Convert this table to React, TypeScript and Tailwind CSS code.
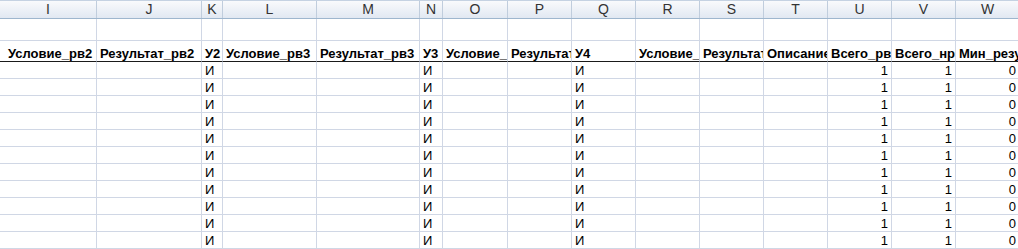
import React from "react";

type Col = { key: string; w: string; head: string; data?: string; align?: "left" | "right" };

const cols: Col[] = [
  { key: "I", w: "w-[97px]", head: "Условие_рв2" },
  { key: "J", w: "w-[105px]", head: "Результат_рв2" },
  { key: "K", w: "w-[21px]", head: "У2", data: "И" },
  { key: "L", w: "w-[94px]", head: "Условие_рв3" },
  { key: "M", w: "w-[103px]", head: "Результат_рв3" },
  { key: "N", w: "w-[23px]", head: "У3", data: "И" },
  { key: "O", w: "w-[65px]", head: "Условие_рв4" },
  { key: "P", w: "w-[64px]", head: "Результат_рв4" },
  { key: "Q", w: "w-[64px]", head: "У4", data: "И" },
  { key: "R", w: "w-[64px]", head: "Условие_рв5" },
  { key: "S", w: "w-[64px]", head: "Результат_рв5" },
  { key: "T", w: "w-[64px]", head: "Описание" },
  { key: "U", w: "w-[64px]", head: "Всего_рв", data: "1", align: "right" },
  { key: "V", w: "w-[64px]", head: "Всего_нр", data: "1", align: "right" },
  { key: "W", w: "w-[64px]", head: "Мин_результат", data: "0", align: "right" },
];

const rows = Array.from({ length: 12 }, (_, i) => i);

export default function App() {
  return (
    <div className="w-[1018px] h-[249px] overflow-hidden bg-white font-['Liberation_Sans',Arial,sans-serif] text-[13px] text-black">
      {/* column letters */}
      <div className="flex h-[19px] w-max border-t border-t-[#c5d2e2] border-b border-[#9eb6ce] bg-gradient-to-b from-[#f9fafc] to-[#e1e8f2]">
        {cols.map((c) => (
          <div
            key={c.key}
            className={`${c.w} shrink-0 border-r border-[#c0cddd] flex items-center justify-center text-[14px] text-[#333]`}
          >
            {c.key}
          </div>
        ))}
      </div>

      {/* empty row */}
      <div className="flex h-[22px] w-max">
        {cols.map((c) => (
          <div key={c.key} className={`${c.w} shrink-0 border-r border-b border-[#d0d7e5]`} />
        ))}
      </div>

      {/* field names */}
      <div className="flex h-[21px] w-max">
        {cols.map((c, i) => (
          <div
            key={c.key}
            className={`${c.w} shrink-0 border-r border-[#d0d7e5] border-b border-b-[#1a1a1a] overflow-hidden whitespace-nowrap font-bold leading-[15px] flex items-end ${i === 0 ? "pl-[8px]" : "pl-[3px]"}`}
          >
            {c.head}
          </div>
        ))}
      </div>

      {/* data */}
      {rows.map((r) => (
        <div key={r} className="flex h-[17px] w-max">
          {cols.map((c) => (
            <div
              key={c.key}
              className={`${c.w} shrink-0 border-r border-b border-[#d0d7e5] overflow-hidden whitespace-nowrap leading-[14px] flex items-end text-black ${
                c.align === "right" ? "justify-end pr-[3px]" : "pl-[3px]"
              }`}
            >
              {c.data ?? ""}
            </div>
          ))}
        </div>
      ))}
    </div>
  );
}
